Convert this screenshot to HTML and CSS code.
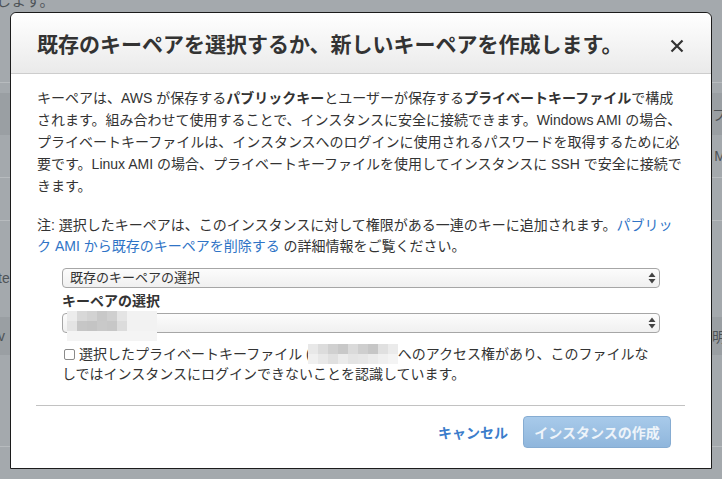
FILE: index.html
```html
<!DOCTYPE html>
<html lang="ja">
<head>
<meta charset="utf-8">
<title>キーペア</title>
<link rel="stylesheet" href="styles.css">
</head>
<body>
<div class="page">
  <div class="bg">
    <div class="bg-row r1"><span class="bg-top-text">します。</span></div>
    <div class="bg-row r2"></div>
    <div class="bg-row band r3"><span class="rt">フ</span></div>
    <div class="bg-row r4 line"><span class="rt">M</span></div>
    <div class="bg-row r5 line"></div>
    <div class="bg-row r6"><span class="lt">te</span></div>
    <div class="bg-row band r7"><span class="lt">v</span><span class="rt">明</span></div>
    <div class="bg-row r8 line"></div>
    <div class="bg-row r9"></div>
  </div>

  <div class="modal">
    <div class="modal-header">
      <h1 class="modal-title">既存のキーペアを選択するか、新しいキーペアを作成します。</h1>
      <svg class="close" width="14" height="14" viewBox="0 0 14 14"><path d="M1.5 1.5L12.5 12.5M12.5 1.5L1.5 12.5" stroke="#333" stroke-width="2.2" stroke-linecap="butt"/></svg>
    </div>
    <div class="modal-body">
      <p class="desc">キーペアは、AWS が保存する<b>パブリックキー</b>とユーザーが保存する<b>プライベートキーファイル</b>で構成<br>されます。組み合わせて使用することで、インスタンスに安全に接続できます。Windows AMI の場合、<br>プライベートキーファイルは、インスタンスへのログインに使用されるパスワードを取得するために必<br>要です。Linux AMI の場合、プライベートキーファイルを使用してインスタンスに SSH で安全に接続で<br>きます。</p>
      <p class="note">注: 選択したキーペアは、このインスタンスに対して権限がある一連のキーに追加されます。<a class="link">パブリッ<br>ク AMI から既存のキーペアを削除する</a> の詳細情報をご覧ください。</p>

      <div class="form">
        <div class="select">
          <span class="select-text">既存のキーペアの選択</span>
          <svg class="arrows" width="8" height="12" viewBox="0 0 8 12"><path d="M4 0.5L7.5 5H0.5Z M4 11.5L7.5 7H0.5Z" fill="#444"/></svg>
        </div>
        <div class="label">キーペアの選択</div>
        <div class="select sel2">
          <span class="select-text"></span>
          <svg class="arrows" width="8" height="12" viewBox="0 0 8 12"><path d="M4 0.5L7.5 5H0.5Z M4 11.5L7.5 7H0.5Z" fill="#444"/></svg>
          <div class="mosaic m1">
            <i style="background:#ececec"></i><i style="background:#d8d8d8"></i><i style="background:#d2d2d2"></i><i style="background:#c8c8c8"></i><i style="background:#cfcfcf"></i><i style="background:#e4e4e4"></i><i style="background:#f2f2f2"></i><i style="background:#f2f2f2"></i><i style="background:#f2f2f2"></i>
            <i style="background:#e4e4e4"></i><i style="background:#c6c6c6"></i><i style="background:#c4c4c4"></i><i style="background:#c9c9c9"></i><i style="background:#c7c7c7"></i><i style="background:#dcdcdc"></i><i style="background:#f2f2f2"></i><i style="background:#f2f2f2"></i><i style="background:#f2f2f2"></i>
            <i style="background:#f4f4f4"></i><i style="background:#f4f4f4"></i><i style="background:#f4f4f4"></i><i style="background:#f4f4f4"></i><i style="background:#f4f4f4"></i><i style="background:#f4f4f4"></i><i style="background:#f4f4f4"></i><i style="background:#f4f4f4"></i><i style="background:#f4f4f4"></i>
          </div>
        </div>
        <p class="ack"><span class="checkbox"></span>選択したプライベートキーファイル (<span class="mosaic m2"><i style="background:#e8e8e8"></i><i style="background:#dcdcdc"></i><i style="background:#d0d0d0"></i><i style="background:#c8c8c8"></i><i style="background:#dadada"></i><i style="background:#cecece"></i><i style="background:#c6c6c6"></i><i style="background:#e0e0e0"></i><i style="background:#ebebeb"></i><i style="background:#f0f0f0"></i><i style="background:#e8e8e8"></i><i style="background:#e0e0e0"></i><i style="background:#ebebeb"></i><i style="background:#e4e4e4"></i><i style="background:#e6e6e6"></i><i style="background:#ebebeb"></i><i style="background:#f0f0f0"></i><i style="background:#f4f4f4"></i></span>へのアクセス権があり、このファイルな<br>しではインスタンスにログインできないことを認識しています。</p>
      </div>

      <div class="divider"></div>
      <div class="footer">
        <a class="cancel">キャンセル</a>
        <button class="primary">インスタンスの作成</button>
      </div>
    </div>
  </div>
</div>
</body>
</html>
```

FILE: styles.css
```css
* { box-sizing: border-box; }
html, body {
  margin: 0;
  padding: 0;
}
body {
  width: 722px;
  height: 479px;
  overflow: hidden;
  background: #a4a9ad;
  font-family: "Liberation Sans", "Noto Sans CJK JP", sans-serif;
  color: #333;
}
.page {
  position: relative;
  width: 722px;
  height: 479px;
  overflow: hidden;
}

/* dimmed page behind the dialog */
.bg {
  display: flex;
  flex-direction: column;
  width: 722px;
  color: #4e5357;
  font-size: 13px;
}
.bg-row {
  display: flex;
  align-items: center;
  justify-content: space-between;
  flex: none;
}
.bg-row.line { border-bottom: 1px solid #b7bbbe; }
.band { background: #9a9fa3; }
.r1 { height: 83px; align-items: flex-start; border-bottom: 1px solid #b7bbbe; overflow: hidden; }
.r2 { height: 10px; }
.r3 { height: 42px; }
.r4 { height: 43px; }
.r5 { height: 43px; }
.r6 { height: 96px; padding-top: 18px; }
.r7 { height: 38px; }
.r8 { height: 92px; }
.r9 { height: 40px; }
.bg-top-text {
  font-size: 15px;
  line-height: 15px;
  margin-top: -7px;
  margin-left: -4px;
}
.lt { margin-left: -2px; font-size: 14px; }
.rt { margin-left: auto; margin-right: -4px; font-size: 14px; }

/* dialog */
.modal {
  position: absolute;
  left: 10px;
  top: 12px;
  width: 702px;
  height: 457px;
  background: #fff;
  border: 1px solid #1c1c1c;
  border-radius: 6px 6px 0 0;
  overflow: hidden;
  display: flex;
  flex-direction: column;
}
.modal-header {
  height: 61px;
  flex: none;
  border-bottom: 1px solid #cdcdcd;
  background: linear-gradient(#ffffff, #eaeaea);
  display: flex;
  align-items: center;
  justify-content: space-between;
  padding: 4px 27px 0 26px;
  border-radius: 6px 6px 0 0;
}
.modal-title {
  margin: 0;
  font-size: 21px;
  font-weight: bold;
  color: #333;
  line-height: 28px;
  white-space: nowrap;
}
.close { display: block; margin-top: 1px; }

.modal-body {
  padding: 13px 26px 0 26px;
  font-size: 14px;
  color: #333;
}
.desc {
  margin: 0;
  line-height: 22px;
  white-space: nowrap;
}
.note {
  margin: 18px 0 0 0;
  line-height: 21px;
  white-space: nowrap;
}
.link { color: #2f74c6; }

.form {
  margin: 11px 25px 0 25px;
}
.select {
  position: relative;
  height: 20px;
  border: 1px solid #a6a6a6;
  border-radius: 4px;
  background: linear-gradient(#fcfcfc, #f0f0f0);
  display: flex;
  align-items: center;
  padding: 0 0 0 7px;
}
.select-text {
  font-size: 13px;
  color: #333;
  line-height: 18px;
  flex: 1;
}
.arrows {
  margin-right: 3px;
  flex: none;
}
.label {
  font-weight: bold;
  font-size: 14px;
  line-height: 24px;
  margin-top: 1px;
}
.mosaic {
  display: grid;
}
.mosaic i { display: block; }
.m1 {
  position: absolute;
  left: 4px;
  top: -3px;
  grid-template-columns: repeat(9, 10px);
  grid-template-rows: repeat(3, 10px);
}
.m2 {
  display: inline-grid;
  grid-template-columns: repeat(9, 10px);
  grid-template-rows: repeat(2, 10px);
  height: 20px;
  vertical-align: top;
  margin-left: -3px;
}
.ack {
  margin: 11px 0 0 0;
  line-height: 20px;
  white-space: nowrap;
}
.checkbox {
  display: inline-block;
  width: 11px;
  height: 11px;
  border: 1px solid #8a8a8a;
  border-radius: 2px;
  background: #fff;
  margin: 0 4px 0 2px;
  vertical-align: -1px;
}

.divider {
  height: 1px;
  background: #c2c2c2;
  margin: 21px 0 0 -1px;
}
.footer {
  display: flex;
  justify-content: flex-end;
  align-items: center;
  gap: 15px;
  padding: 10px 14px 0 0;
}
.cancel {
  color: #3c7dcb;
  font-weight: bold;
  font-size: 14px;
}
.primary {
  width: 148px;
  height: 32px;
  border: 1px solid #86acd2;
  border-radius: 4px;
  background: linear-gradient(#a8caea, #8fb6dc);
  color: #eef4fa;
  font-family: "Liberation Sans", "Noto Sans CJK JP", sans-serif;
  font-weight: bold;
  font-size: 14px;
  padding: 0;
}
```
